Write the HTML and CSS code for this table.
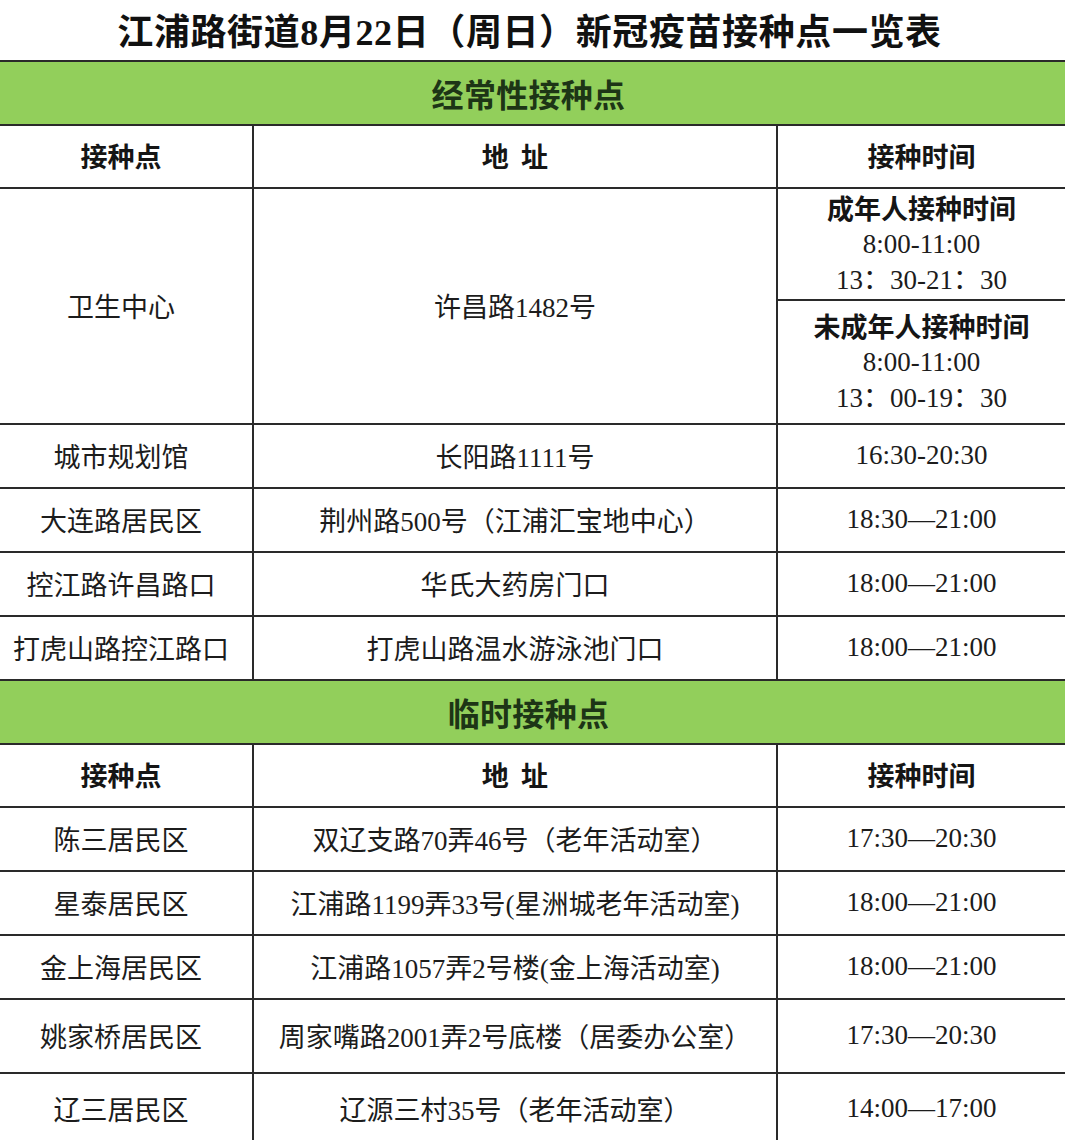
FILE: index.html
```html
<!DOCTYPE html>
<html lang="zh-CN">
<head>
<meta charset="utf-8">
<title>江浦路街道8月22日（周日）新冠疫苗接种点一览表</title>
<link rel="stylesheet" href="styles.css">
</head>
<body>
<div class="sheet">
  <h1 class="title">江浦路街道8月22日（周日）新冠疫苗接种点一览表</h1>

  <div class="band">经常性接种点</div>
  <div class="row head">
    <div class="cell">接种点</div>
    <div class="cell">地&nbsp;&nbsp;址</div>
    <div class="cell">接种时间</div>
  </div>
  <div class="row tall">
    <div class="cell">卫生中心</div>
    <div class="cell">许昌路1482号</div>
    <div class="cell split">
      <div class="sub sub-top">
        <div class="lbl">成年人接种时间</div>
        <div>8:00-11:00</div>
        <div>13：30-21：30</div>
      </div>
      <div class="sub sub-bottom">
        <div class="lbl">未成年人接种时间</div>
        <div>8:00-11:00</div>
        <div>13：00-19：30</div>
      </div>
    </div>
  </div>
  <div class="row">
    <div class="cell">城市规划馆</div>
    <div class="cell">长阳路1111号</div>
    <div class="cell">16:30-20:30</div>
  </div>
  <div class="row">
    <div class="cell">大连路居民区</div>
    <div class="cell">荆州路500号（江浦汇宝地中心）</div>
    <div class="cell">18:30—21:00</div>
  </div>
  <div class="row">
    <div class="cell">控江路许昌路口</div>
    <div class="cell">华氏大药房门口</div>
    <div class="cell">18:00—21:00</div>
  </div>
  <div class="row">
    <div class="cell">打虎山路控江路口</div>
    <div class="cell">打虎山路温水游泳池门口</div>
    <div class="cell">18:00—21:00</div>
  </div>

  <div class="band">临时接种点</div>
  <div class="row head">
    <div class="cell">接种点</div>
    <div class="cell">地&nbsp;&nbsp;址</div>
    <div class="cell">接种时间</div>
  </div>
  <div class="row">
    <div class="cell">陈三居民区</div>
    <div class="cell">双辽支路70弄46号（老年活动室）</div>
    <div class="cell">17:30—20:30</div>
  </div>
  <div class="row">
    <div class="cell">星泰居民区</div>
    <div class="cell">江浦路1199弄33号(星洲城老年活动室)</div>
    <div class="cell">18:00—21:00</div>
  </div>
  <div class="row">
    <div class="cell">金上海居民区</div>
    <div class="cell">江浦路1057弄2号楼(金上海活动室)</div>
    <div class="cell">18:00—21:00</div>
  </div>
  <div class="row wide">
    <div class="cell">姚家桥居民区</div>
    <div class="cell">周家嘴路2001弄2号底楼（居委办公室）</div>
    <div class="cell">17:30—20:30</div>
  </div>
  <div class="row last">
    <div class="cell">辽三居民区</div>
    <div class="cell">辽源三村35号（老年活动室）</div>
    <div class="cell">14:00—17:00</div>
  </div>
</div>
</body>
</html>
```

FILE: styles.css
```css
* { box-sizing: border-box; }

html, body {
  margin: 0;
  padding: 0;
  background: #ffffff;
}

body {
  width: 1065px;
  height: 1140px;
  overflow: hidden;
  font-family: "Liberation Serif", "Noto Sans CJK SC", serif;
  color: #1c1c1c;
}

.sheet {
  display: flex;
  flex-direction: column;
}

.title {
  margin: 0;
  height: 60px;
  display: flex;
  align-items: center;
  justify-content: center;
  font-size: 36px;
  font-weight: 700;
  letter-spacing: 0.6px;
  color: #111;
  padding: 0 6px 2px 0;
}

.band {
  height: 64px;
  border-top: 2px solid #2a2a2a;
  background: #92cf5b;
  display: flex;
  align-items: center;
  justify-content: center;
  font-family: "Noto Sans CJK SC", sans-serif;
  font-size: 32px;
  font-weight: 700;
  color: #1d3516;
  letter-spacing: 0.3px;
  padding-right: 8px;
}

.row {
  display: grid;
  grid-template-columns: 254px 524px 1fr;
  height: 64px;
  border-top: 2px solid #2a2a2a;
}

.row.head { height: 63px; }
.row.tall { height: 236px; }
.row.wide { height: 74px; }
.row.last { height: 72px; }

.cell {
  display: flex;
  align-items: center;
  justify-content: center;
  font-size: 27px;
  white-space: nowrap;
  padding-bottom: 2px;
}

.cell:nth-child(1),
.cell:nth-child(2) {
  border-right: 2px solid #2a2a2a;
}

.cell:nth-child(1) {
  padding-right: 10px;
}

.head .cell {
  font-family: "Noto Sans CJK SC", sans-serif;
  font-weight: 700;
  font-size: 27px;
  color: #151515;
}

.cell.split {
  flex-direction: column;
  align-items: stretch;
  justify-content: flex-start;
  padding: 0;
}

.sub {
  display: flex;
  flex-direction: column;
  align-items: center;
  justify-content: center;
  line-height: 36px;
  font-size: 27px;
}

.sub-top {
  height: 112px;
  border-bottom: 2px solid #2a2a2a;
}

.sub-bottom {
  flex: 1;
}

.lbl {
  font-family: "Noto Sans CJK SC", sans-serif;
  font-weight: 700;
  font-size: 27px;
  color: #151515;
}
```
